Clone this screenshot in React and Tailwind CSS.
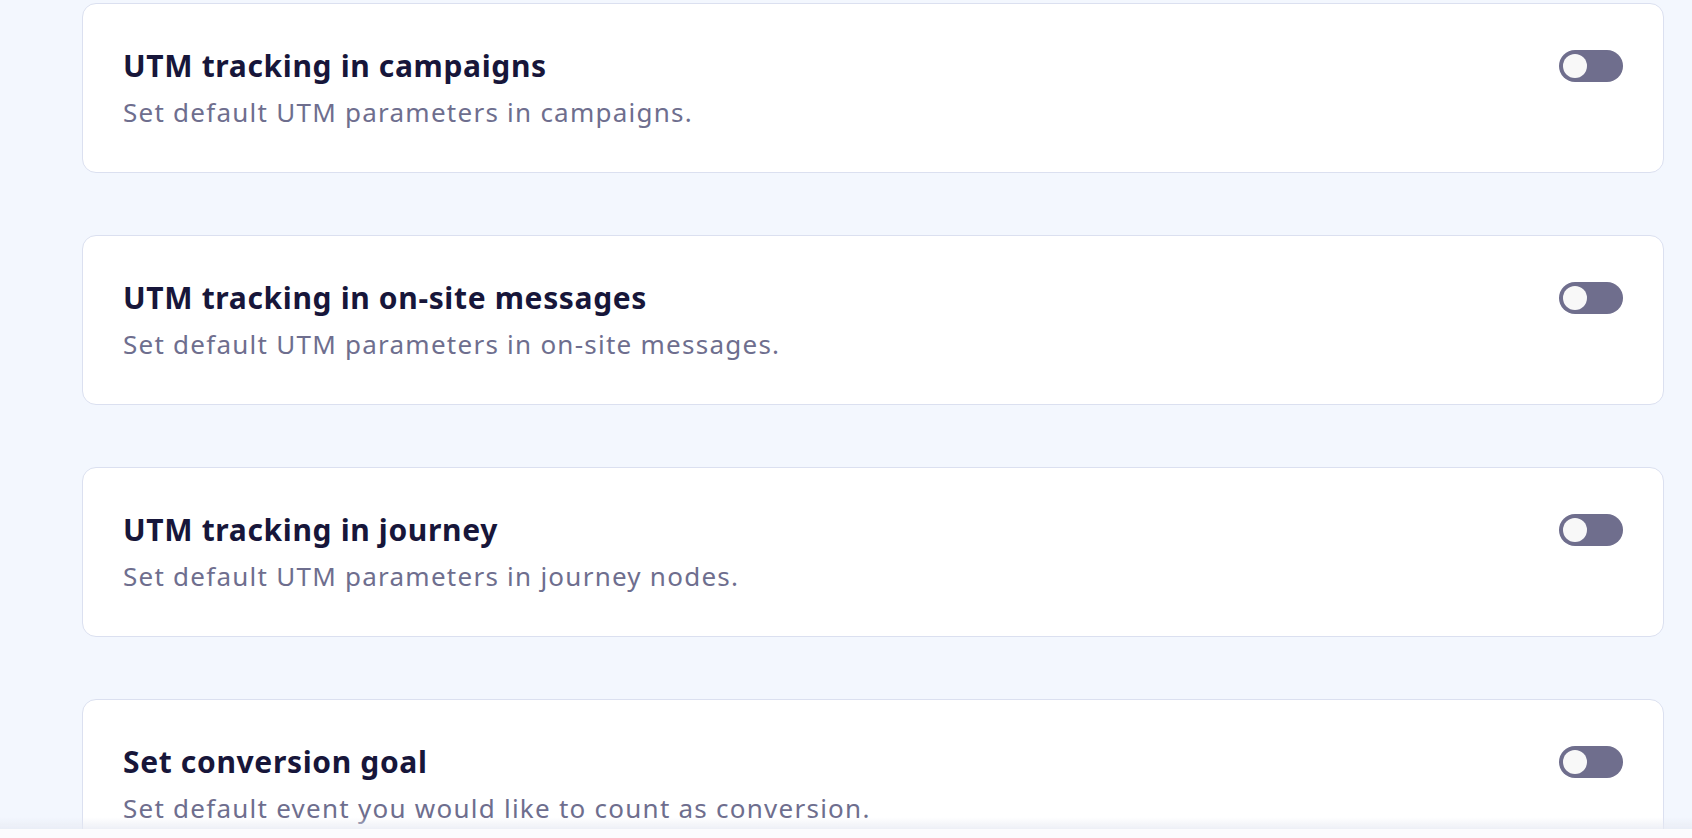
const settings = [
  {
    title: "UTM tracking in campaigns",
    description: "Set default UTM parameters in campaigns.",
  },
  {
    title: "UTM tracking in on-site messages",
    description: "Set default UTM parameters in on-site messages.",
  },
  {
    title: "UTM tracking in journey",
    description: "Set default UTM parameters in journey nodes.",
  },
  {
    title: "Set conversion goal",
    description: "Set default event you would like to count as conversion.",
  },
];

function Toggle() {
  return (
    <button
      type="button"
      role="switch"
      aria-checked="false"
      className="flex h-8 w-16 shrink-0 items-center rounded-full bg-[#6f6e8d] px-1"
    >
      <span className="h-6 w-6 rounded-full bg-[#f8f8f8]" />
    </button>
  );
}

function SettingCard({ title, description }) {
  return (
    <div className="box-border h-[170px] shrink-0 rounded-[14px] border border-[#dbe0f0] bg-white pl-10 pr-10 pt-[44px]">
      <div className="flex items-center justify-between">
        <h3 className="text-[30px] font-bold leading-[36px] tracking-[0.65px] text-[#17163a]">
          {title}
        </h3>
        <Toggle />
      </div>
      <p className="mt-[10px] text-[26px] leading-[36px] tracking-[1.25px] text-[#6e6e8e]">
        {description}
      </p>
    </div>
  );
}

export default function App() {
  return (
    <div
      className="relative h-[838px] overflow-hidden bg-[#f3f7fe] pl-[82px] pr-[28px] pt-[3px]"
      style={{ fontFamily: "'Noto Sans', 'Open Sans', sans-serif" }}
    >
      <div className="flex flex-col gap-[62px]">
        {settings.map((s) => (
          <SettingCard key={s.title} {...s} />
        ))}
      </div>
      {/* bottom bar edge */}
      <div className="pointer-events-none fixed inset-x-0 bottom-0">
        <div className="h-3 bg-gradient-to-b from-transparent to-[#e6e9f2]/70" />
        <div className="h-[9px] bg-[#fbfbfd]" />
      </div>
    </div>
  );
}
